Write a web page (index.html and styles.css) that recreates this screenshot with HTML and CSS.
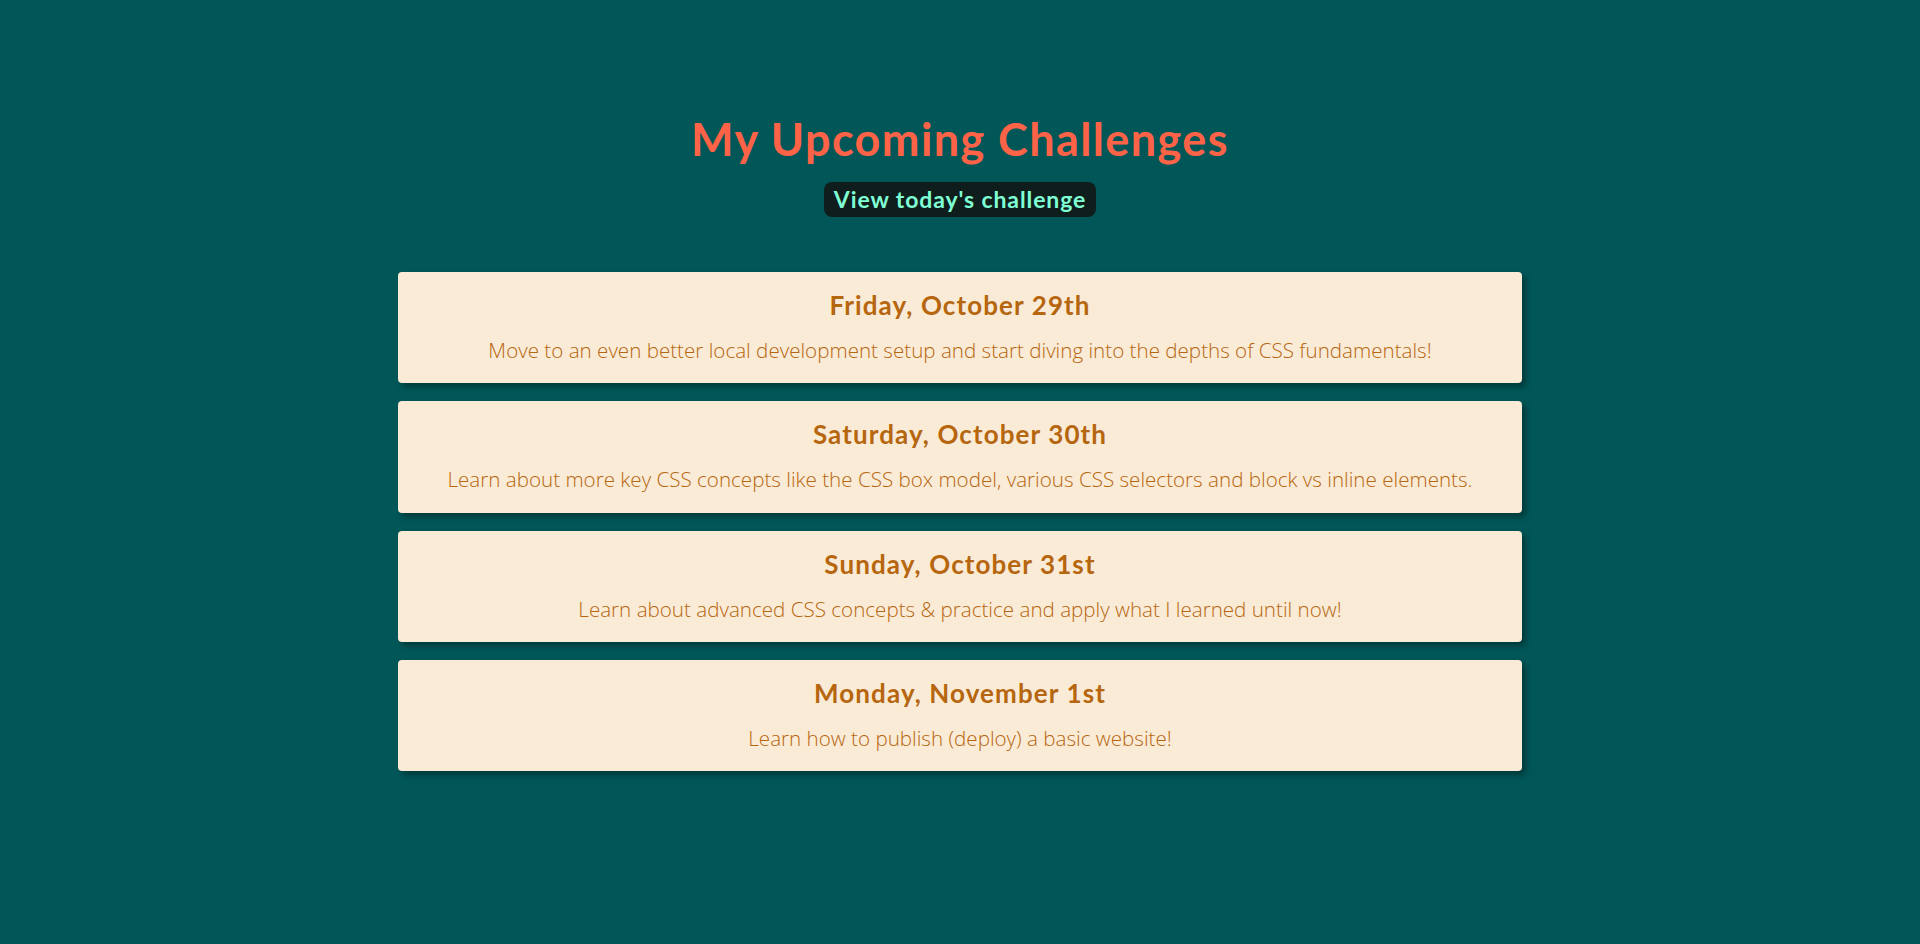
FILE: index.html
```html
<!DOCTYPE html>
<html lang="en">
<head>
<meta charset="utf-8">
<title>My Upcoming Challenges</title>
<link rel="stylesheet" href="styles.css">
</head>
<body>
  <header class="header">
    <h1 class="title">My Upcoming Challenges</h1>
    <a class="today-link" href="#">View today's challenge</a>
  </header>
  <main class="list">
    <section class="card">
      <h2 class="card-title">Friday, October 29th</h2>
      <p class="card-text">Move to an even better local development setup and start diving into the depths of CSS fundamentals!</p>
    </section>
    <section class="card">
      <h2 class="card-title">Saturday, October 30th</h2>
      <p class="card-text">Learn about more key CSS concepts like the CSS box model, various CSS selectors and block vs inline elements.</p>
    </section>
    <section class="card">
      <h2 class="card-title">Sunday, October 31st</h2>
      <p class="card-text">Learn about advanced CSS concepts &amp; practice and apply what I learned until now!</p>
    </section>
    <section class="card">
      <h2 class="card-title">Monday, November 1st</h2>
      <p class="card-text">Learn how to publish (deploy) a basic website!</p>
    </section>
  </main>
</body>
</html>
```
FILE: styles.css
```css
html, body {
  margin: 0;
  padding: 0;
}
body {
  background: #015758;
  min-height: 944px;
  font-family: "Open Sans", "Noto Sans", sans-serif;
}
.header {
  display: flex;
  flex-direction: column;
  align-items: center;
  padding-top: 112px;
}
.title {
  margin: 0;
  font-family: Lato, "Noto Sans", sans-serif;
  font-weight: 700;
  font-size: 45px;
  letter-spacing: 1.4px;
  line-height: 54px;
  color: #fe6347;
}
.today-link {
  margin-top: 16px;
  display: inline-block;
  padding: 0 10px;
  height: 35px;
  line-height: 35px;
  border-radius: 8px;
  background: #0f1d1d;
  color: #7fffd4;
  text-decoration: none;
  font-family: Lato, "Noto Sans", sans-serif;
  font-weight: 700;
  font-size: 23px;
  letter-spacing: 0.9px;
}
.list {
  width: 1124px;
  margin: 55px auto 0;
  display: flex;
  flex-direction: column;
  gap: 18px;
}
.card {
  background: #faebd7;
  border-radius: 4px;
  box-shadow: 4px 4px 6px rgba(0, 0, 0, 0.35);
  padding: 17px 20px 20.33px;
  text-align: center;
  color: #b6660e;
  display: flex;
  flex-direction: column;
  gap: 16px;
}
.card-title {
  margin: 0;
  font-family: Lato, "Noto Sans", sans-serif;
  font-weight: 700;
  font-size: 26px;
  letter-spacing: 1.1px;
  line-height: 32px;
}
.card-text {
  margin: 0;
  font-weight: 350;
  font-size: 20.6px;
  line-height: 26px;
}
```
